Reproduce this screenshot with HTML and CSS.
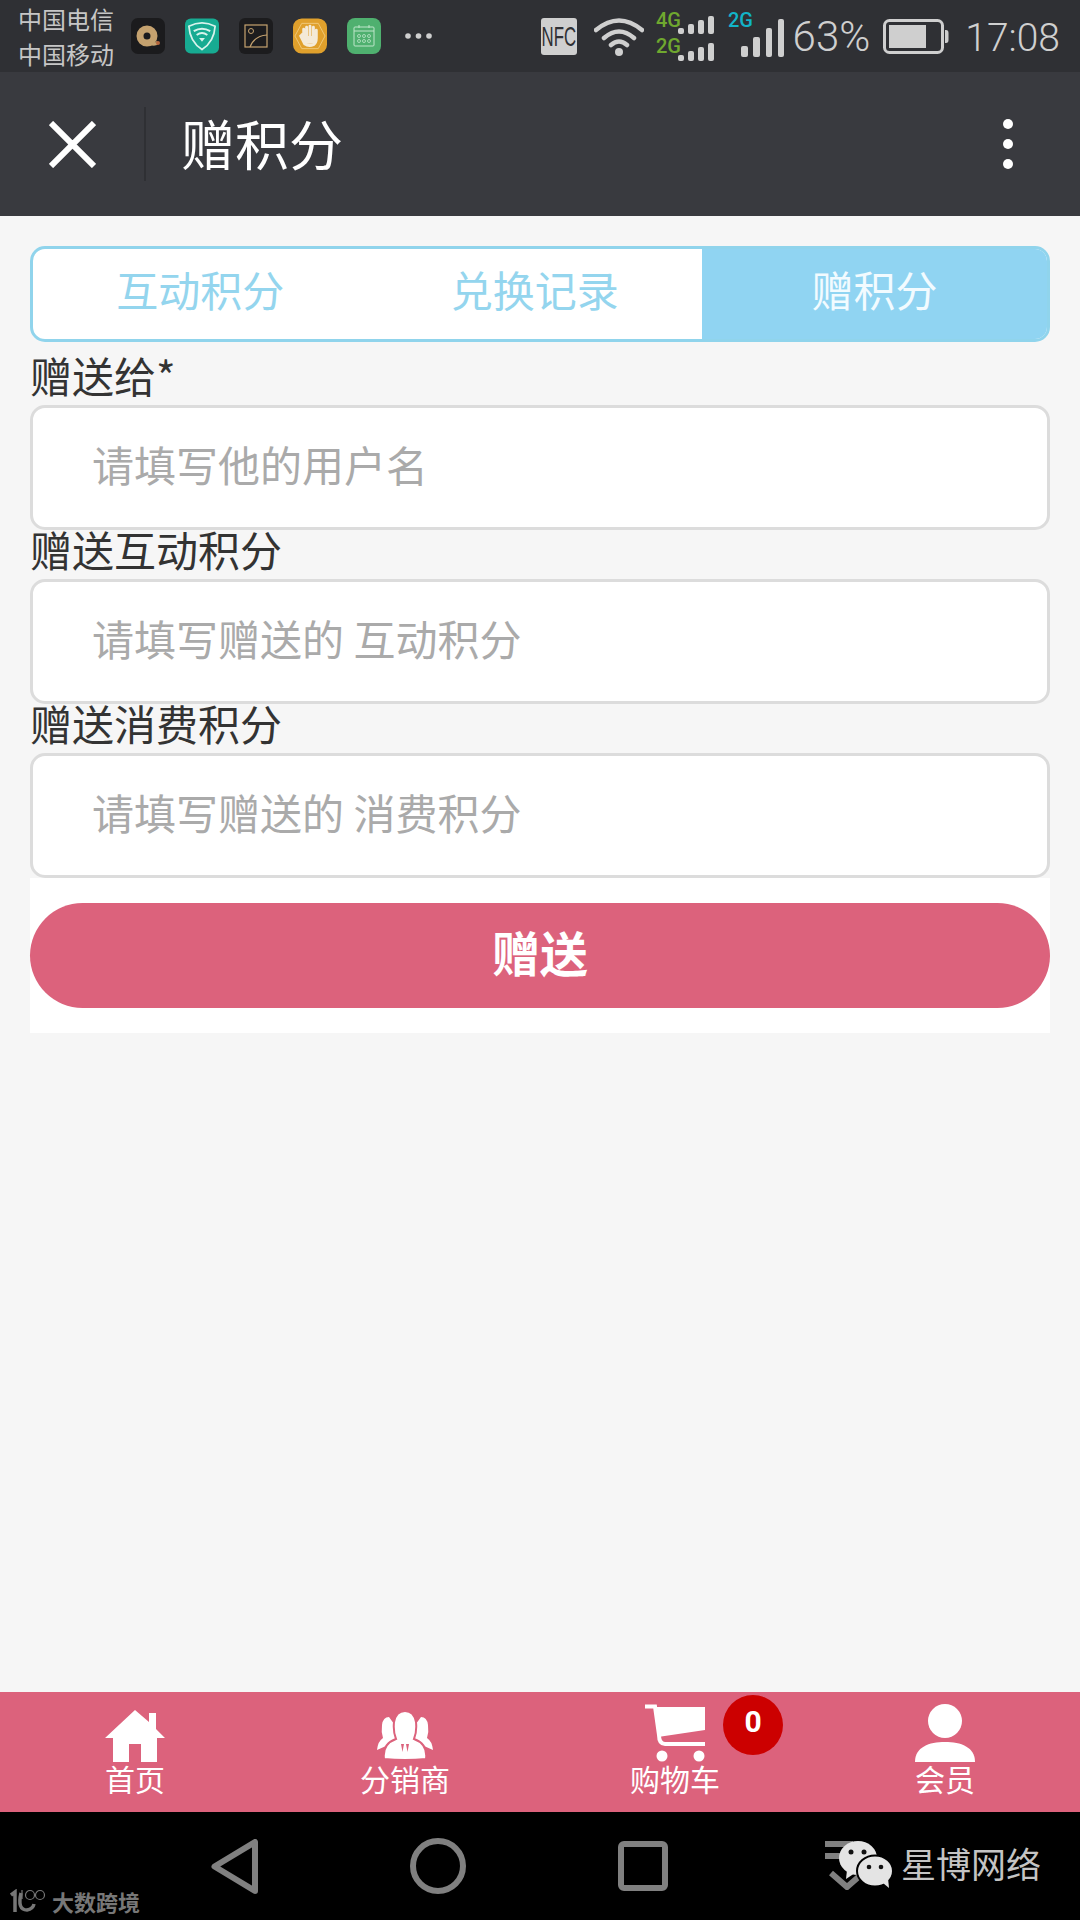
FILE: index.html
```html
<!DOCTYPE html>
<html lang="zh-CN">
<head>
<meta charset="utf-8">
<title>赠积分</title>
<link rel="stylesheet" href="styles.css">
</head>
<body>
<div class="screen">
  <header class="status">
    <div class="carrier"><div>中国电信</div><div>中国移动</div></div>
    <div class="notifs">
      <svg class="notif" viewBox="0 0 34 36"><rect width="34" height="36" rx="7" fill="#1b1b1d"/><circle cx="16" cy="18" r="7" fill="none" stroke="#c5a26f" stroke-width="7"/><path d="M19 25 Q24 28 27 24" fill="none" stroke="#c5a26f" stroke-width="3"/><circle cx="27" cy="25" r="2" fill="#b5653c"/></svg>
      <svg class="notif" viewBox="0 0 35 36"><rect width="35" height="36" rx="6" fill="#17ab92"/><path d="M4 8 Q17.500 1 31 8 Q30 24 17.500 32 Q5 24 4 8Z" fill="none" stroke="#d8f3ec" stroke-width="1.800"/><path d="M9 13 Q17.500 8 26 13M12 17 Q17.500 13 23 17" fill="none" stroke="#d8f3ec" stroke-width="2"/><path d="M14.500 20 H20.500 L17.500 24Z" fill="#d8f3ec"/></svg>
      <svg class="notif" viewBox="0 0 34 36"><rect width="34" height="36" rx="6" fill="#1c1c1e"/><rect x="6" y="7" width="22" height="22" fill="none" stroke="#c5a26f" stroke-width="1.200"/><circle cx="12" cy="13" r="2.500" fill="none" stroke="#c5a26f"/><path d="M11 29 Q15 18 28 17" fill="none" stroke="#c5a26f" stroke-width="1.200"/></svg>
      <svg class="notif" viewBox="0 0 35 36"><rect width="35" height="36" rx="9" fill="#e0a02c"/><path d="M9 5 H26 L33 18 L26 31 H9 L2 18Z" fill="none" stroke="#efc879"/><path d="M11 11 V20 L9 17 L8 18 L12 26 Q16 29 21 27 Q24 25 24 20 V12 M14 9 V20 M17.500 8 V20 M21 9 V20" fill="none" stroke="#f4ead8" stroke-width="3" stroke-linecap="round"/><rect x="12" y="18" width="11" height="8" fill="#f4ead8"/></svg>
      <svg class="notif" viewBox="0 0 34 36"><rect width="34" height="36" rx="8" fill="#4fb06f"/><rect x="7" y="9" width="20" height="19" rx="1" fill="none" stroke="#bfe6cb"/><path d="M7 13 H27M12 7 V10M22 7 V10" stroke="#bfe6cb" fill="none"/><g fill="none" stroke="#bfe6cb" stroke-width=".8"><circle cx="12" cy="18" r="1.500"/><circle cx="17" cy="18" r="1.500"/><circle cx="22" cy="18" r="1.500"/><circle cx="12" cy="23" r="1.500"/><circle cx="17" cy="23" r="1.500"/><circle cx="22" cy="23" r="1.500"/></g></svg>
      <svg class="more" viewBox="0 0 27 8"><circle cx="3" cy="4" r="2.800"/><circle cx="13.500" cy="4" r="2.800"/><circle cx="24" cy="4" r="2.800"/></svg>
    </div>
    <div class="indicators">
      <span class="nfc"><span class="nfc-text">NFC</span></span>
      <svg class="wifi" viewBox="0 0 50 39"><path d="M2 13 Q25 -6 48 13M10 21 Q25 8 40 21M17 28 Q25 21 33 28" fill="none" stroke="#cfcfcf" stroke-width="4.500" stroke-linecap="round"/><circle cx="25" cy="35" r="4" fill="#cfcfcf"/></svg>
      <svg class="sim" viewBox="0 0 58 72"><text class="net net-green" x="0" y="27">4G</text><text class="net net-green" x="0" y="53">2G</text><g fill="#cfcfcf"><rect x="22" y="28" width="6" height="6" rx="2"/><rect x="32" y="24" width="6" height="10" rx="2"/><rect x="42" y="20" width="6" height="14" rx="2"/><rect x="52" y="16" width="6" height="18" rx="2"/><rect x="22" y="55" width="6" height="6" rx="2"/><rect x="32" y="51" width="6" height="10" rx="2"/><rect x="42" y="47" width="6" height="14" rx="2"/><rect x="52" y="43" width="6" height="18" rx="2"/></g></svg>
      <svg class="signal" viewBox="0 0 56 72"><text class="net net-cyan" x="0" y="27">2G</text><g fill="#cfcfcf"><rect x="13" y="46" width="7" height="11" rx="2"/><rect x="25" y="37" width="7" height="20" rx="2"/><rect x="38" y="28" width="6" height="29" rx="2"/><rect x="50" y="19" width="6" height="38" rx="2"/></g></svg>
      <span class="pct">63%</span>
      <svg class="battery" viewBox="0 0 66 35"><rect x="1.500" y="1.500" width="58" height="32" rx="5" fill="none" stroke="#cfcfcf" stroke-width="3"/><rect x="6" y="6" width="37" height="23" fill="#cfcfcf"/><path d="M62 11 H63 Q65.500 11 65.500 14 V21 Q65.500 24 63 24 H62Z" fill="#cfcfcf"/></svg>
      <span class="time">17:08</span>
    </div>
  </header>

  <div class="toolbar">
    <svg class="close" viewBox="0 0 47 47"><path d="M2 2 L45 45M45 2 L2 45" stroke="#fff" stroke-width="6" fill="none"/></svg>
    <div class="divider"></div>
    <h1 class="title">赠积分</h1>
    <div class="kebab"><i></i><i></i><i></i></div>
  </div>

  <main class="content">
    <nav class="tabs">
      <a class="tab">互动积分</a>
      <a class="tab">兑换记录</a>
      <a class="tab tab-active">赠积分</a>
    </nav>
    <form class="form">
      <label class="field-label">赠送给*</label>
      <input class="field" type="text" placeholder="请填写他的用户名">
      <label class="field-label">赠送互动积分</label>
      <input class="field" type="text" placeholder="请填写赠送的 互动积分">
      <label class="field-label">赠送消费积分</label>
      <input class="field" type="text" placeholder="请填写赠送的 消费积分">
      <div class="submit-panel"><button class="submit" type="button">赠送</button></div>
    </form>
  </main>

  <nav class="bottom-nav">
    <a class="nav-item">
      <span class="nav-icon"><svg class="ic-home" viewBox="0 0 60 52"><path d="M30 0 L44 12 V3 H51 V19 L60 28 H52 V52 H36 V34 H24 V52 H8 V28 H0Z" fill="#fff"/></svg></span>
      <span class="nav-label">首页</span>
    </a>
    <a class="nav-item">
      <span class="nav-icon"><svg class="ic-team" viewBox="0 0 56 50"><path d="M9 36 L0 40 Q1 31 6 28 Q4 22 5 15 Q6 7 12 7 L20 18 V36Z M47 36 L56 40 Q55 31 50 28 Q52 22 51 15 Q50 7 44 7 L36 18 V36Z" fill="#fff"/><path d="M7 49 Q5 34 19 29 Q16 22 17 12 Q19 1 28 1 Q37 1 39 12 Q40 22 37 29 Q51 34 49 49 Q28 51 7 49Z" fill="#fff" stroke="#dc627c" stroke-width="2"/><path d="M24 34 L25.500 42 L27 34ZM29 34 L30.500 42 L32 34Z" fill="#dc627c"/></svg></span>
      <span class="nav-label">分销商</span>
    </a>
    <a class="nav-item">
      <span class="nav-icon"><svg class="ic-cart" viewBox="0 0 60 58"><path d="M0 2.500 H10 L14 31 Q14 40 20 40 H60" fill="none" stroke="#fff" stroke-width="4"/><path d="M10 3 H60 V26 L13 33Z" fill="#fff"/><circle cx="17" cy="52" r="5.500" fill="#fff"/><circle cx="54" cy="52" r="5.500" fill="#fff"/></svg></span>
      <span class="nav-label">购物车</span>
      <span class="badge">0</span>
    </a>
    <a class="nav-item">
      <span class="nav-icon"><svg class="ic-user" viewBox="0 0 60 58"><circle cx="30" cy="17" r="17" fill="#fff"/><path d="M0 58 C0 43 14 38 30 38 C46 38 60 43 60 58Z" fill="#fff"/></svg></span>
      <span class="nav-label">会员</span>
    </a>
  </nav>

  <footer class="sysbar">
    <svg class="sys-back" viewBox="0 0 47 55"><path d="M3.500 27.500 L44 3 V52Z" fill="none" stroke="#808080" stroke-width="6" stroke-linejoin="round"/></svg>
    <svg class="sys-home" viewBox="0 0 56 56"><circle cx="28" cy="28" r="25" fill="none" stroke="#808080" stroke-width="6"/></svg>
    <svg class="sys-recent" viewBox="0 0 50 50"><rect x="3" y="3" width="44" height="44" rx="3" fill="none" stroke="#808080" stroke-width="6"/></svg>
    <div class="mark-left">
      <svg class="mark-logo" viewBox="0 0 36 24"><path d="M1 6 L5 3 V23" fill="none" stroke="#777" stroke-width="3.500"/><path d="M11 4 Q7 21 17 21 Q23 20 24 15" fill="none" stroke="#777" stroke-width="3.500"/><path d="M12 1 V10" stroke="#777" stroke-width="1.200"/><circle cx="20" cy="6" r="4.500" fill="none" stroke="#777" stroke-width="1.200"/><circle cx="30" cy="6" r="4.500" fill="none" stroke="#777" stroke-width="1.200"/></svg>
      <span class="mark-left-text">大数跨境</span>
    </div>
    <div class="mark-right">
      <svg class="wechat" viewBox="0 0 68 50"><path d="M0 4 H28M0 16 H22" stroke="#808080" stroke-width="6" fill="none"/><path d="M6 33 L22 47 L38 33" stroke="#808080" stroke-width="6" fill="none"/><ellipse cx="33" cy="18" rx="19" ry="17" fill="#e4e4e4"/><path d="M22 30 L21 39 L30 33Z" fill="#e4e4e4"/><circle cx="26" cy="12" r="2.500" fill="#111"/><circle cx="39" cy="12" r="2.500" fill="#111"/><ellipse cx="50" cy="31" rx="18" ry="15.500" stroke="#000" stroke-width="2" fill="#e4e4e4"/><path d="M58 43 L64 48 L63 38Z" fill="#e4e4e4"/><circle cx="44" cy="27" r="2.300" fill="#111"/><circle cx="56" cy="27" r="2.300" fill="#111"/></svg>
      <span class="mark-right-text">星博网络</span>
    </div>
  </footer>
</div>
</body>
</html>
```
FILE: styles.css
```css
* { box-sizing: border-box; }
html, body { margin: 0; padding: 0; }
body { font-family: "Noto Sans CJK SC", "Noto Sans", sans-serif; background: #f6f6f6; }
svg { display: block; }

.screen { width: 1080px; height: 1920px; display: flex; flex-direction: column; overflow: hidden; }

/* status bar */
.status { height: 72px; flex: none; background: #2f3034; display: flex; align-items: center; padding: 0 20px 0 18px; color: #cfcfcf; }
.carrier { width: 96px; font-size: 24px; line-height: 35px; color: #c6c6c6; margin-top: -1px; }
.notifs { display: flex; align-items: center; gap: 20px; margin-left: 17px; }
.notif { width: 34px; height: 36px; }
.more { width: 27px; height: 8px; fill: #cfcfcf; margin-left: 4px; }
.indicators { margin-left: auto; display: flex; align-items: center; }
.nfc { width: 36px; height: 37px; border-radius: 3px; background: #cfcfcf; display: flex; align-items: center; justify-content: center; overflow: visible; }
.nfc-text { font-family: "Liberation Sans", sans-serif; font-size: 28px; line-height: 37px; color: #2f3034; transform: scaleX(.6); white-space: nowrap; flex: none; }
.wifi { width: 50px; height: 39px; margin-left: 17px; }
.sim { width: 58px; height: 72px; margin-left: 12px; }
.signal { width: 56px; height: 72px; margin-left: 14px; }
.net { font-family: Roboto, sans-serif; font-size: 20px; font-weight: 500; }
.net-green { fill: #6fa82f; }
.net-cyan { fill: #12b4c8; }
.pct { font-family: Roboto, sans-serif; font-weight: 300; font-size: 42px; line-height: 72px; margin: 2px 0 0 9px; }
.battery { width: 66px; height: 35px; margin-left: 13px; }
.time { font-family: Roboto, sans-serif; font-weight: 300; font-size: 39px; line-height: 72px; margin: 3px 0 0 16px; }

/* toolbar */
.toolbar { height: 144px; flex: none; background: #393a3f; display: flex; align-items: center; padding: 0 67px 0 49px; color: #fff; }
.close { width: 47px; height: 47px; }
.divider { width: 2px; height: 74px; background: #2f3034; margin-left: 48px; }
.title { margin: -2px 0 0 35px; font-size: 54px; font-weight: 400; line-height: 72px; }
.kebab { margin-left: auto; display: flex; flex-direction: column; gap: 10px; }
.kebab i { display: block; width: 10px; height: 10px; border-radius: 50%; background: #fff; }

/* main */
.content { flex: 1; padding: 30px 30px 0; background: #f6f6f6; }
.tabs { display: grid; grid-template-columns: 334.5px 334.5px 1fr; height: 96px; border: 3px solid #90d4ec; border-radius: 15px; background: #fff; overflow: hidden; margin-bottom: 14px; }
.tab { font-size: 42px; line-height: 80px; text-align: center; color: #94d5ee; }
.tab-active { background: #90d4f2; color: #f2fbff; }
.form { display: block; }
.field-label { display: block; font-size: 42px; line-height: 38px; height: 49px; color: #333; }
.field { display: block; width: 100%; height: 125px; border: 3px solid #dcdcdc; border-radius: 15px; background: #fff; padding: 0 0 9px 59px; font-family: inherit; font-size: 42px; color: #333; outline: none; }
.field::placeholder { color: #aaa; opacity: 1; }
.submit-panel { background: #fff; padding: 25px 0; }
.submit { display: block; width: 100%; height: 105px; border: 0; border-radius: 53px; background: #dc627c; color: #fff; font-family: inherit; font-size: 48px; font-weight: 700; padding: 0 0 9px; }

/* bottom navigation */
.bottom-nav { height: 120px; flex: none; background: #dc627c; display: grid; grid-template-columns: repeat(4, 270px); color: #fff; }
.nav-item { position: relative; display: flex; flex-direction: column; align-items: center; }
.nav-icon { height: 70px; display: flex; align-items: flex-end; justify-content: center; }
.ic-home { width: 60px; height: 52px; }
.ic-team { width: 56px; height: 50px; margin-bottom: 2px; }
.ic-cart { width: 60px; height: 58px; }
.ic-user { width: 60px; height: 58px; }
.nav-label { font-size: 30px; line-height: 36px; margin-top: -2px; }
.badge { position: absolute; left: 183px; top: 3px; width: 60px; height: 60px; border-radius: 50%; background: #cc0000; color: #fff; font-family: Roboto, sans-serif; font-weight: 700; font-size: 30px; line-height: 54px; text-align: center; }

/* system navigation */
.sysbar { position: relative; height: 108px; flex: none; background: #000; display: flex; align-items: center; padding: 0 0 0 211px; gap: 152px; }
.sys-back { width: 47px; height: 55px; }
.sys-home { width: 56px; height: 56px; }
.sys-recent { width: 50px; height: 50px; }
.mark-left { position: absolute; left: 10px; bottom: 6px; display: flex; align-items: center; gap: 6px; }
.mark-logo { width: 36px; height: 24px; }
.mark-left-text { font-size: 22px; font-weight: 700; line-height: 26px; color: #777; }
.mark-right { position: absolute; left: 825px; top: 28px; display: flex; align-items: center; gap: 8px; }
.wechat { width: 68px; height: 50px; }
.mark-right-text { font-size: 35px; line-height: 46px; color: #c4c4c4; margin-top: -4px; }
```
